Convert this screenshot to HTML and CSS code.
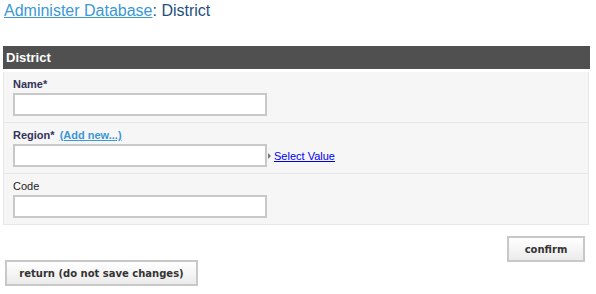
FILE: index.html
```html
<!DOCTYPE html>
<html lang="en">
<head>
  <meta charset="UTF-8" />
  <title>Administer Database: District</title>
  <link rel="stylesheet" href="styles.css">
</head>
<body>
  <h1 class="page-title"><a href="#">Administer Database</a>: District</h1>

  <div class="form-box">
    <div class="form-head">District</div>
    <div class="form-body">
      <div class="form-row">
        <label class="req">Name*</label>
        <input type="text" class="field">
      </div>
      <div class="form-row">
        <label class="req">Region* <a href="#" class="add-new">(Add new...)</a></label>
        <div class="field-line">
          <input type="text" class="field">
          <span class="arrow"></span>
          <a href="#" class="select-value">Select Value</a>
        </div>
      </div>
      <div class="form-row">
        <label>Code</label>
        <input type="text" class="field">
      </div>
    </div>
  </div>

  <div class="actions">
    <button class="btn">confirm</button>
  </div>
  <div class="back">
    <button class="btn">return (do not save changes)</button>
  </div>
</body>
</html>
```

FILE: styles.css
```css
body { margin: 0; padding: 0; background: #fff; font-family: Arial, "Liberation Sans", sans-serif; color: #222; }
.page-title { margin: 0; padding: 1px 0 0 4px; font-size: 16px; font-weight: normal; line-height: 19px; color: #1f4f7f; }
.page-title a { color: #3a98d4; text-decoration: underline; }

.form-box { margin: 26px 6px 0 3px; }
.form-head { background: #505050; color: #fff; font-weight: bold; font-size: 13px; line-height: 23px; height: 23px; padding-left: 3px; }
.form-body { margin-top: 3px; background: #f6f6f6; border: 1px solid #e8e8e8; border-top: none; margin-right: 1px; }
.form-row { padding: 4px 9px 6px; border-top: 1px solid #e6e6e6; }
.form-row:first-child { border-top: none; }
.form-row label { display: block; font-size: 11px; line-height: 16px; margin-bottom: 1px; color: #222; }
.form-row label.req { font-weight: bold; color: #33335a; }
.add-new { color: #3a98d4; font-weight: bold; margin-left: 2px; }
.field { display: block; box-sizing: border-box; width: 254px; height: 23px; margin: 0; border: 2px solid #c8c8c8; background: #fff; padding: 2px 4px; font-size: 11px; }
.field-line { display: flex; align-items: center; }
.arrow { width: 0; height: 0; border-top: 3px solid transparent; border-bottom: 3px solid transparent; border-left: 3px solid #777; margin: 0 3px 0 1px; }
.select-value { font-size: 11px; color: #0000ee; text-decoration: underline; }

.actions { display: flex; justify-content: flex-end; margin: 11px 11px 0 0; }
.back { margin: -2px 0 0 5px; }
.btn { box-sizing: border-box; height: 26px; border: 2px solid #c8c8c8; background: linear-gradient(#ffffff, #ebebeb); font-family: "DejaVu Sans", Verdana, sans-serif; font-weight: bold; font-size: 10px; color: #333; padding: 0; cursor: pointer; }
.actions .btn { width: 78px; }
.back .btn { width: 193px; }
```
